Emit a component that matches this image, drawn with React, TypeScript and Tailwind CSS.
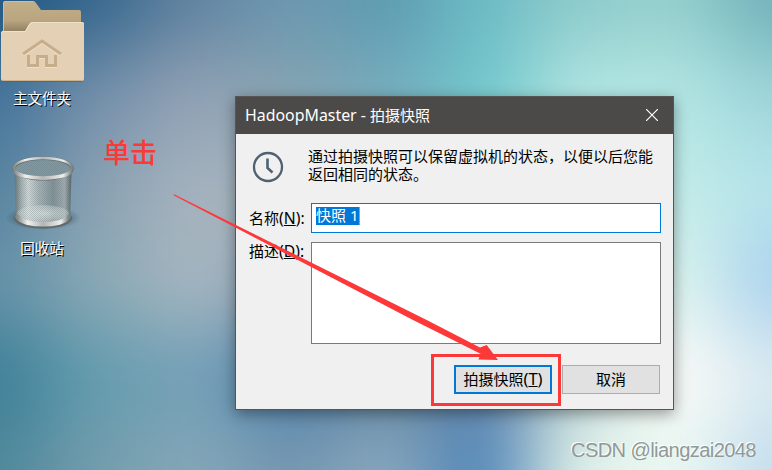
import React from "react";

const xs = [0, 96, 193, 290, 386, 482, 579, 675, 772];
const ys = [0, 94, 188, 282, 376, 470];

// Colour samples of the wallpaper, one row of samples for each entry of ys.
const mesh = [
  ["#1f5682", "#35668c", "#6082a0", "#6c98b0", "#5c9ab0", "#6cbac4", "#8ccaca", "#94cfcc", "#6fb0b8"],
  ["#44739a", "#7490ab", "#93a2b5", "#86a3b0", "#76acbd", "#70c8cd", "#b2e6e3", "#b3e6e4", "#9cd4d9"],
  ["#5683a0", "#8ba1b2", "#a6b3be", "#a0b0bb", "#80b0bb", "#90cccc", "#b2e2de", "#c2ece8", "#b6e4ea"],
  ["#6692a8", "#8ba9b5", "#a8b7c1", "#90a5b6", "#90a5b0", "#90a5b0", "#c0e0dc", "#dcf5ee", "#aad0ee"],
  ["#3b7f98", "#629cae", "#74a0b7", "#4e80ac", "#6588a0", "#6080a8", "#c0d8d8", "#fffcf9", "#d9eaf0"],
  ["#50889a", "#749dad", "#86a8b8", "#7597b1", "#8caabf", "#4e86b9", "#e2f2e9", "#e8f8f1", "#c2dcee"],
];

function Wallpaper() {
  return (
    <svg className="absolute inset-0" width="772" height="470" viewBox="0 0 772 470">
      <defs>
        <filter id="soft" x="-200" y="-200" width="1172" height="870" filterUnits="userSpaceOnUse" colorInterpolationFilters="sRGB">
          <feGaussianBlur stdDeviation="38" />
        </filter>
      </defs>
      <g filter="url(#soft)">
        {mesh.map((row, j) =>
          row.map((c, i) => {
            const x0 = i === 0 ? -200 : xs[i] - 48.5;
            const x1 = i === 8 ? 972 : xs[i] + 49;
            const y0 = j === 0 ? -200 : ys[j] - 47;
            const y1 = j === 5 ? 670 : ys[j] + 48;
            return <rect key={`${i}-${j}`} x={x0} y={y0} width={x1 - x0} height={y1 - y0} fill={c} />;
          }),
        )}
      </g>
    </svg>
  );
}

function HomeFolder() {
  return (
    <svg className="block" width="86" height="84" viewBox="0 0 86 84">
      <defs>
        <linearGradient id="back" x2="0" y2="1">
          <stop offset="0" stopColor="#c3ae8a" />
          <stop offset="0.25" stopColor="#baa580" />
          <stop offset="0.4" stopColor="#8f7f62" />
        </linearGradient>
      </defs>
      <path d="M3 78V3q0-2 2-2h28q2 0 3 2l5 7h38q2 0 2 2v66z" fill="url(#back)" />
      <path d="M3.500 40V3.500q0-2 2-2h27.500" fill="none" stroke="#d0bd99" />
      <path d="M1 80V33q0-2 2-2h22l4-7q1-2 3-2h50q2 0 2 2v55q0 3-3 3H3q-2 0-2-2z" fill="#5c5d58" opacity=".65" />
      <path d="M1 79V33q0-2 2-2h22l4-7q1-2 3-2h50q2 0 2 2v55q0 2-2 2H3q-2 0-2-2z" fill="#e4d1b5" />
      <path d="M1.500 33q0-1.500 2-1.500h22l4-7q1-2 3-2h50q1 0 1 1.500" fill="none" stroke="#efe3ce" />
      <path d="M2 80.500h80" stroke="#cdb28b" />
      <path d="M23 54l19-13 19 13M28.500 55v10.500h9V56.500h9v9h9V55" fill="none" stroke="#efdfc6" strokeWidth="3" transform="translate(0 1)" />
      <path d="M23 54l19-13 19 13M28.500 55v10.500h9V56.500h9v9h9V55" fill="none" stroke="#c6ae8c" strokeWidth="3" />
    </svg>
  );
}

function TrashBin() {
  return (
    <svg className="block" width="86" height="80" viewBox="0 0 86 80">
      <defs>
        <linearGradient id="side">
          <stop offset="0" stopColor="#66757a" />
          <stop offset=".12" stopColor="#a9b3b4" />
          <stop offset=".24" stopColor="#d6dada" />
          <stop offset=".42" stopColor="#a9b5b8" />
          <stop offset=".68" stopColor="#82929a" />
          <stop offset=".88" stopColor="#a4aeb0" />
          <stop offset="1" stopColor="#56656a" />
        </linearGradient>
        <linearGradient id="rim">
          <stop offset="0" stopColor="#858d8c" />
          <stop offset=".2" stopColor="#f1f1ee" />
          <stop offset=".5" stopColor="#b4b6b6" />
          <stop offset=".85" stopColor="#eeeeeb" />
          <stop offset="1" stopColor="#7c8383" />
        </linearGradient>
        <radialGradient id="floor">
          <stop offset="0" stopColor="#dde2de" stopOpacity=".9" />
          <stop offset="1" stopColor="#dde2de" stopOpacity=".35" />
        </radialGradient>
        <radialGradient id="ground">
          <stop offset=".6" stopColor="#314f60" stopOpacity=".5" />
          <stop offset="1" stopColor="#314f60" stopOpacity="0" />
        </radialGradient>
        <pattern id="wire" width="2" height="2" patternUnits="userSpaceOnUse">
          <path d="M0 0h1v1H0zM1 1h1v1H1z" fill="#5c6f75" opacity=".25" />
        </pattern>
      </defs>
      <ellipse cx="43" cy="66" rx="38" ry="12" fill="url(#ground)" />
      <path d="M14.500 20L16 66c1 12 53 12 54 0L71.500 20z" fill="url(#side)" />
      <ellipse cx="43" cy="61.500" rx="26" ry="8.500" fill="url(#floor)" />
      <path d="M14.500 20L16 66c1 12 53 12 54 0L71.500 20z" fill="url(#wire)" />
      <path d="M16.500 66c5 10.500 48 10.500 53 0" fill="none" stroke="#62696a" strokeWidth="5.500" strokeLinecap="round" />
      <path d="M17.500 64.800c5 10 46 10 51 0" fill="none" stroke="url(#rim)" strokeWidth="4.600" strokeLinecap="round" />
      <ellipse cx="43" cy="16" rx="28.500" ry="10" fill="#8199a4" />
      <ellipse cx="43" cy="16" rx="28.500" ry="10" fill="url(#wire)" />
      <ellipse cx="43" cy="16.500" rx="29" ry="10.200" fill="none" stroke="#667171" strokeWidth="3.600" />
      <ellipse cx="43" cy="16" rx="29" ry="10" fill="none" stroke="url(#rim)" strokeWidth="2.400" />
      <path d="M14.500 19c6 9.500 51 9.500 57 0" fill="none" stroke="url(#rim)" strokeWidth="3.600" />
    </svg>
  );
}

function ClockIcon() {
  return (
    <svg className="block" width="32" height="32" viewBox="0 0 32 32" fill="none" stroke="#4f6070">
      <circle cx="16" cy="16" r="14" strokeWidth="2.300" />
      <path d="M15.500 7.500v9.500l5 4.500" strokeWidth="2.600" />
    </svg>
  );
}

export default function App() {
  return (
    <main className="relative h-[470px] w-[772px] overflow-hidden font-['Noto_Sans','Noto_Sans_CJK_SC',sans-serif] text-black">
      <Wallpaper />

      <div className="absolute left-0 top-0 flex w-[84px] flex-col text-center font-['Liberation_Sans','Noto_Sans_CJK_SC',sans-serif] text-[14.500px] leading-5 text-white [text-shadow:1px_1px_0_#000]">
        <HomeFolder />
        <span className="mt-[5px]">主文件夹</span>
        <div className="mt-[43px]"><TrashBin /></div>
        <span className="mt-[7px]">回收站</span>
      </div>

      <div className="absolute left-[103px] top-[133px] font-['Noto_Sans_CJK_SC',sans-serif] text-[27px] font-medium leading-[38px] text-[#fd3838]">单击</div>

      <section className="absolute left-[235px] top-[96px] flex h-[314px] w-[439px] flex-col border border-[#575553] bg-[#f0f0f0] shadow-[0_4px_14px_rgba(0,0,0,0.38)]">
        <header className="flex h-[37px] shrink-0 items-center justify-between bg-[#4c4a48] pl-[9px] pr-[15px] text-white">
          <h1 className="-mt-px flex items-baseline whitespace-pre text-[15px] leading-5"><span className="text-[15.900px]">HadoopMaster - </span><span>拍摄快照</span></h1>
          <svg className="-mt-px" width="12" height="12" viewBox="0 0 12 12" stroke="#fff" strokeWidth="1.200">
            <path d="M0 0l12 12M12 0L0 12" />
          </svg>
        </header>
        <div className="flex pl-4 pt-[13px]">
          <div className="mt-1"><ClockIcon /></div>
          <p className="ml-6 mt-px h-9 whitespace-nowrap font-['Liberation_Sans','Noto_Sans_CJK_SC',sans-serif] text-[15px] leading-[18px]">
            通过拍摄快照可以保留虚拟机的状态，以便以后您能<br />返回相同的状态。
          </p>
        </div>
        <div className="mt-[19px] flex pl-[13px] pr-3">
          <label className="w-[62px] shrink-0 pt-[5px] text-[15px] leading-5">名称<span className="text-[15.700px]">(<u>N</u>):</span></label>
          <div className="h-[30px] flex-1 border border-[#0078d7] bg-white p-[3px] pl-1">
            <span className="block h-[18px] w-[44px] whitespace-nowrap border-r border-[#ff8728] bg-[#0078d7] text-[15px] leading-[17px] text-white">快照 1</span>
          </div>
        </div>
        <div className="mt-[9px] flex pl-[13px] pr-3">
          <label className="-mt-px w-[62px] shrink-0 text-[15px] leading-5">描述<span className="text-[15.700px]">(<u>D</u>):</span></label>
          <div className="h-[102px] flex-1 border border-[#7a7a7a] bg-white" />
        </div>
        <div className="mt-[21px] flex justify-end gap-[10px] pr-[13px]">
          <button className="h-[29px] w-[98px] whitespace-nowrap border-2 border-[#0078d7] bg-[#e1e1e1] pb-0.5 text-[15px] leading-5">拍摄快照<span className="text-[16.500px]">(<u>T</u>)</span></button>
          <button className="h-[29px] w-[98px] border border-[#adadad] bg-[#e1e1e1] pb-px text-[15px] leading-5">取消</button>
        </div>
      </section>

      <div className="absolute left-[431px] top-[354px] h-[52px] w-[130px] border-[3px] border-[#fd3838]" />
      <svg className="absolute left-0 top-0" width="772" height="470" viewBox="0 0 772 470">
        <path d="M173.500 194L426.700 320L480 347.500L486.700 345L498 360L478.300 359.500L481 354L413 320L174 195.500Z" fill="#fd3838" />
      </svg>

      <div className="absolute left-[571px] top-[438px] whitespace-nowrap font-['Liberation_Sans',sans-serif] text-[20px] leading-6 tracking-[-0.550px] text-[#8f9997] [text-shadow:-1px_-1px_0_#fff]">CSDN @liangzai2048</div>
    </main>
  );
}
